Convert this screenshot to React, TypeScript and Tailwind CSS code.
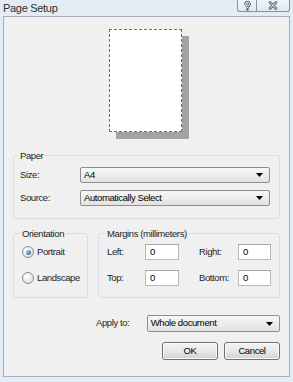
import type { ReactNode } from 'react';

const font = "font-['Liberation_Sans',Arial,sans-serif]";

function Arrow() {
  return (
    <svg width="7" height="4" viewBox="0 0 7 4" className="shrink-0">
      <path d="M0 0h7L3.5 4z" fill="#000" />
    </svg>
  );
}

function Select({ value, className }: { value: string; className: string }) {
  return (
    <div
      className={`flex items-center justify-between pl-[3px] pr-[6px] rounded-[2px] border border-[#8e8e8e] bg-gradient-to-b from-[#f7f7f7] to-[#e2e2e2] text-black ${className}`}
    >
      <span>{value}</span>
      <Arrow />
    </div>
  );
}

function Group({ title, className, children }: { title: string; className: string; children: ReactNode }) {
  return (
    <fieldset className={`border border-[#d5dfe5] rounded-[3px] ${className}`}>
      <legend className="-ml-[2px] px-[2px] leading-[13px]">{title}</legend>
      {children}
    </fieldset>
  );
}

function Radio({ label, checked }: { label: string; checked?: boolean }) {
  return (
    <div className="flex items-center gap-[3px] h-[12px]">
      <span className="w-[12px] h-[12px] rounded-full border border-[#8d8d8d] bg-[radial-gradient(circle_at_35%_35%,#ffffff,#d9d9d9)] flex items-center justify-center">
        {checked && <span className="w-[5px] h-[5px] rounded-full bg-[radial-gradient(circle_at_35%_35%,#9cc3e6,#2d4f78)]" />}
      </span>
      <span>{label}</span>
    </div>
  );
}

function Field({ w }: { w: string }) {
  return (
    <div className={`h-[16px] ${w} border border-[#b6b9c1] border-t-[#9fa3ab] bg-white pl-[4px] flex items-center text-black`}>
      0
    </div>
  );
}

function Button({ label }: { label: string }) {
  return (
    <button className="w-[56px] h-[18px] rounded-[3px] border border-[#707070] bg-gradient-to-b from-[#f3f3f3] via-[#e9e9e9] to-[#d2d2d2] shadow-[inset_0_0_0_1px_#fbfbfb] text-black leading-none tracking-[-0.4px]">
      {label}
    </button>
  );
}

export default function App() {
  return (
    <div className={`w-[293px] h-[382px] bg-[#e3ebf5] flex flex-col text-[9.5px] tracking-[-0.4px] text-[#1e1e1e] ${font} overflow-hidden`}>
      {/* Title bar */}
      <div className="h-[16px] flex items-start">
        <span className="pl-[3px] pt-[2px] text-[11px] tracking-[-0.3px] leading-[13px] text-[#2e2e2e]">Page Setup</span>
        <div className="ml-auto mr-[3px] flex">
          <div className="w-[20px] h-[12px] border border-t-0 border-[#8493a6] rounded-bl-[3px] bg-gradient-to-b from-[#f1f5fa] to-[#dfe7f1] flex items-center justify-center">
            <svg width="9" height="10" viewBox="0 0 9 10">
              <path d="M2.5 3.3a2 2 0 1 1 3 1.7c-.8.5-1 .9-1 1.6" fill="none" stroke="#55606e" strokeWidth="2.6" strokeLinecap="round" />
              <path d="M2.5 3.3a2 2 0 1 1 3 1.7c-.8.5-1 .9-1 1.6" fill="none" stroke="#fff" strokeWidth="1" strokeLinecap="round" />
              <circle cx="4.5" cy="8.6" r="1.2" fill="#55606e" />
            </svg>
          </div>
          <div className="w-[33px] h-[12px] border border-t-0 border-l-0 border-[#8493a6] rounded-br-[3px] bg-gradient-to-b from-[#f1f5fa] to-[#dfe7f1] flex items-center justify-center">
            <svg width="10" height="9" viewBox="0 0 10 9">
              <path d="M2 1.5l6 6M8 1.5l-6 6" stroke="#55606e" strokeWidth="2.6" strokeLinecap="round" />
              <path d="M2 1.5l6 6M8 1.5l-6 6" stroke="#fff" strokeWidth="1" strokeLinecap="round" />
            </svg>
          </div>
        </div>
      </div>

      {/* Client area */}
      <div className="mx-[3px] h-[361px] border border-[#a5b0bd] bg-[#f0f0f0] px-[9px]">
        <div className="mt-[12px] ml-[96px] w-[73px] h-[103px] bg-white border border-dashed border-[#6e6e6e] shadow-[7px_7px_0_#a3a3a3]" />

        <Group title="Paper" className="mt-[17px] pl-[6px] pr-[9px] pt-[5px] pb-[12px]">
          <div className="flex items-center">
            <span className="w-[60px]">Size:</span>
            <Select value="A4" className="w-[190px] h-[16px]" />
          </div>
          <div className="flex items-center mt-[7px]">
            <span className="w-[60px]">Source:</span>
            <Select value="Automatically Select" className="w-[190px] h-[16px]" />
          </div>
        </Group>

        <div className="flex gap-[10px] mt-[8px]">
          <Group title="Orientation" className="w-[75px] pl-[8px] pt-[6px] pb-[13px]">
            <Radio label="Portrait" checked />
            <div className="mt-[14px]">
              <Radio label="Landscape" />
            </div>
          </Group>
          <Group title="Margins (millimeters)" className="flex-1 pl-[8px] pt-[4px] pb-[11px]">
            <div className="flex items-center">
              <span className="w-[38px]">Left:</span>
              <Field w="w-[34px]" />
              <span className="w-[39px] ml-[20px]">Right:</span>
              <Field w="w-[33px]" />
            </div>
            <div className="flex items-center mt-[10px]">
              <span className="w-[38px]">Top:</span>
              <Field w="w-[34px]" />
              <span className="w-[39px] ml-[20px]">Bottom:</span>
              <Field w="w-[33px]" />
            </div>
          </Group>
        </div>

        <div className="flex items-center mt-[17px] ml-[83px]">
          <span className="w-[51px]">Apply to:</span>
          <Select value="Whole document" className="w-[134px] h-[17px]" />
        </div>

        <div className="flex justify-end gap-[6px] mt-[10px]">
          <Button label="OK" />
          <Button label="Cancel" />
        </div>
      </div>
    </div>
  );
}
